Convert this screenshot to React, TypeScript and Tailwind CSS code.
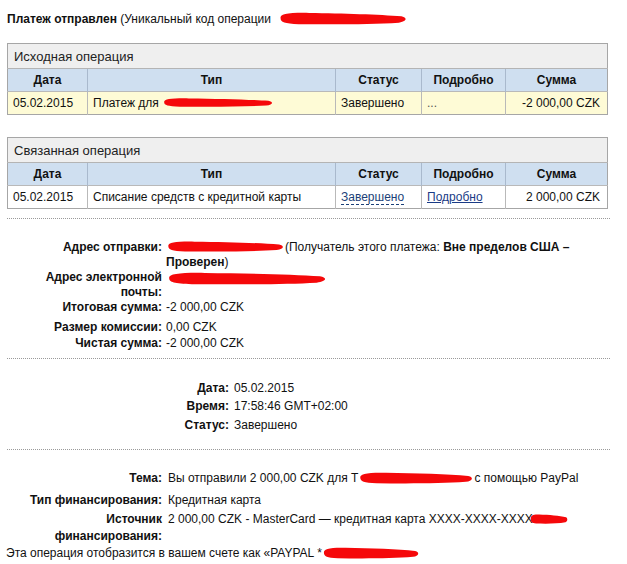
import React from 'react';

const font = "font-['Liberation_Sans',Arial,sans-serif]";

// red marker scribble that hides private data
const Blot = ({ w, h, className = '' }: { w: number; h: number; className?: string }) => (
  <svg width={w} height={h} viewBox="0 0 100 20" preserveAspectRatio="none" className={`inline-block align-middle ${className}`}>
    <path
      d="M2,10 C1,4 8,2 24,2.5 C50,3 78,4.5 95,7 C100,9 99,14 93,15.5 C72,18 42,18 16,17.5 C5,17 2,14.5 2,10 Z"
      fill="#f5080a"
    />
  </svg>
);

const cols = ['w-[80px]', 'w-[248px]', 'w-[86px]', 'w-[84px]', 'w-[102px]'];
const heads = ['Дата', 'Тип', 'Статус', 'Подробно', 'Сумма'];

const OpTable = ({ title, row, rowBg }: { title: string; row: React.ReactNode[]; rowBg: string }) => (
  <table className="w-[600px] border-collapse border border-[#a6a6a6] table-fixed">
    <colgroup>
      {cols.map((c, i) => (
        <col key={i} className={c} />
      ))}
    </colgroup>
    <tbody>
      <tr>
        <td colSpan={5} className="h-[25px] bg-[#efefef] border-b border-[#b4b4b4] pl-[6px] text-[13px] text-[#222]">
          {title}
        </td>
      </tr>
      <tr>
        {heads.map((h, i) => (
          <td key={h} className={`h-[23px] bg-[#cfdff0] text-center font-bold text-[#111] ${i < 4 ? 'border-r border-[#a9b9cd]' : ''}`}>
            {h}
          </td>
        ))}
      </tr>
      <tr className={rowBg}>
        {row.map((c, i) => (
          <td
            key={i}
            className={`h-[23px] border-t border-[#b9b9b9] ${i < 4 ? 'border-r border-r-[#b9b9b9]' : ''} ${i === 4 ? 'text-right pr-[7px]' : 'pl-[5px]'}`}
          >
            {c}
          </td>
        ))}
      </tr>
    </tbody>
  </table>
);

const Dots = ({ className = '' }: { className?: string }) => (
  <div className={`w-[603px] border-b border-dotted border-[#9a9a9a] ${className}`} />
);

export default function App() {
  return (
    <div className={`${font} w-[627px] h-[564px] overflow-hidden bg-white px-[7px] pt-[12px] text-[12px] leading-[15px] text-[#111]`}>
      <div className="h-[16px] whitespace-nowrap">
        <b>Платеж отправлен</b> (Уникальный код операции{' '}
        <Blot w={130} h={15} className="-mt-[2px] ml-[4px]" />
      </div>

      <div className="mt-[15px]">
        <OpTable
          title="Исходная операция"
          rowBg="bg-[#fefbd6]"
          row={[
            '05.02.2015',
            <span key="t" className="whitespace-nowrap">
              Платеж для <Blot w={112} h={11} className="-mt-[2px]" />
            </span>,
            'Завершено',
            <span key="d" className="text-[#555]">...</span>,
            '-2 000,00 CZK',
          ]}
        />
      </div>

      <div className="mt-[22px]">
        <OpTable
          title="Связанная операция"
          rowBg="bg-white"
          row={[
            '05.02.2015',
            'Списание средств с кредитной карты',
            <span key="s" className="text-[#1b3f78] border-b border-dashed border-[#1b3f78]">Завершено</span>,
            <span key="p" className="text-[#1a3b86] underline">Подробно</span>,
            '2 000,00 CZK',
          ]}
        />
      </div>

      <Dots className="mt-[9px]" />

      <div className="pt-[21px] pb-[7px] grid grid-cols-[155px_1fr] gap-x-[4px]">
        <div className="text-right font-bold">Адрес отправки:</div>
        <div>
          <Blot w={119} h={13} className="-mt-[3px]" />
          (Получатель этого платежа: <b>Вне пределов США – Проверен</b>)
        </div>
        <div className="text-right font-bold">
          Адрес электронной
          <br />
          почты:
        </div>
        <div className="pt-[1px]">
          <Blot w={162} h={15} className="align-top" />
        </div>
        <div className="text-right font-bold">Итоговая сумма:</div>
        <div>-2 000,00 CZK</div>
        <div className="text-right font-bold mt-[5px]">Размер комиссии:</div>
        <div className="mt-[5px]">0,00 CZK</div>
        <div className="text-right font-bold mt-[1px]">Чистая сумма:</div>
        <div className="mt-[1px]">-2 000,00 CZK</div>
      </div>

      <Dots />

      <div className="pt-[22px] pb-[16px] grid grid-cols-[222px_1fr] gap-x-[5px]">
        <div className="text-right font-bold">Дата:</div>
        <div>05.02.2015</div>
        <div className="text-right font-bold mt-[3px]">Время:</div>
        <div className="mt-[3px]">17:58:46 GMT+02:00</div>
        <div className="text-right font-bold mt-[4px]">Статус:</div>
        <div className="mt-[4px]">Завершено</div>
      </div>

      <Dots />

      <div className="pt-[21px] grid grid-cols-[155px_1fr] gap-x-[6px]">
        <div className="text-right font-bold">Тема:</div>
        <div className="whitespace-nowrap">
          Вы отправили 2 000,00 CZK для Т<Blot w={116} h={14} className="-mt-[2px]" />с помощью PayPal
        </div>
        <div className="text-right font-bold mt-[7px]">Тип финансирования:</div>
        <div className="mt-[7px]">Кредитная карта</div>
        <div className="text-right font-bold mt-[3px] leading-[17px]">
          Источник
          <br />
          финансирования:
        </div>
        <div className="mt-[3px] leading-[17px] whitespace-nowrap">
          2 000,00 CZK - MasterCard — кредитная карта XXXX-XXXX-XXXX
          <Blot w={38} h={12} className="-mt-[2px] -ml-[3px]" />
        </div>
      </div>
      <div className="-ml-[1px] leading-[17px] whitespace-nowrap">
        Эта операция отобразится в вашем счете как «PAYPAL *<Blot w={98} h={14} className="-mt-[2px]" />
      </div>
      <Dots className="mt-[3px]" />
    </div>
  );
}
